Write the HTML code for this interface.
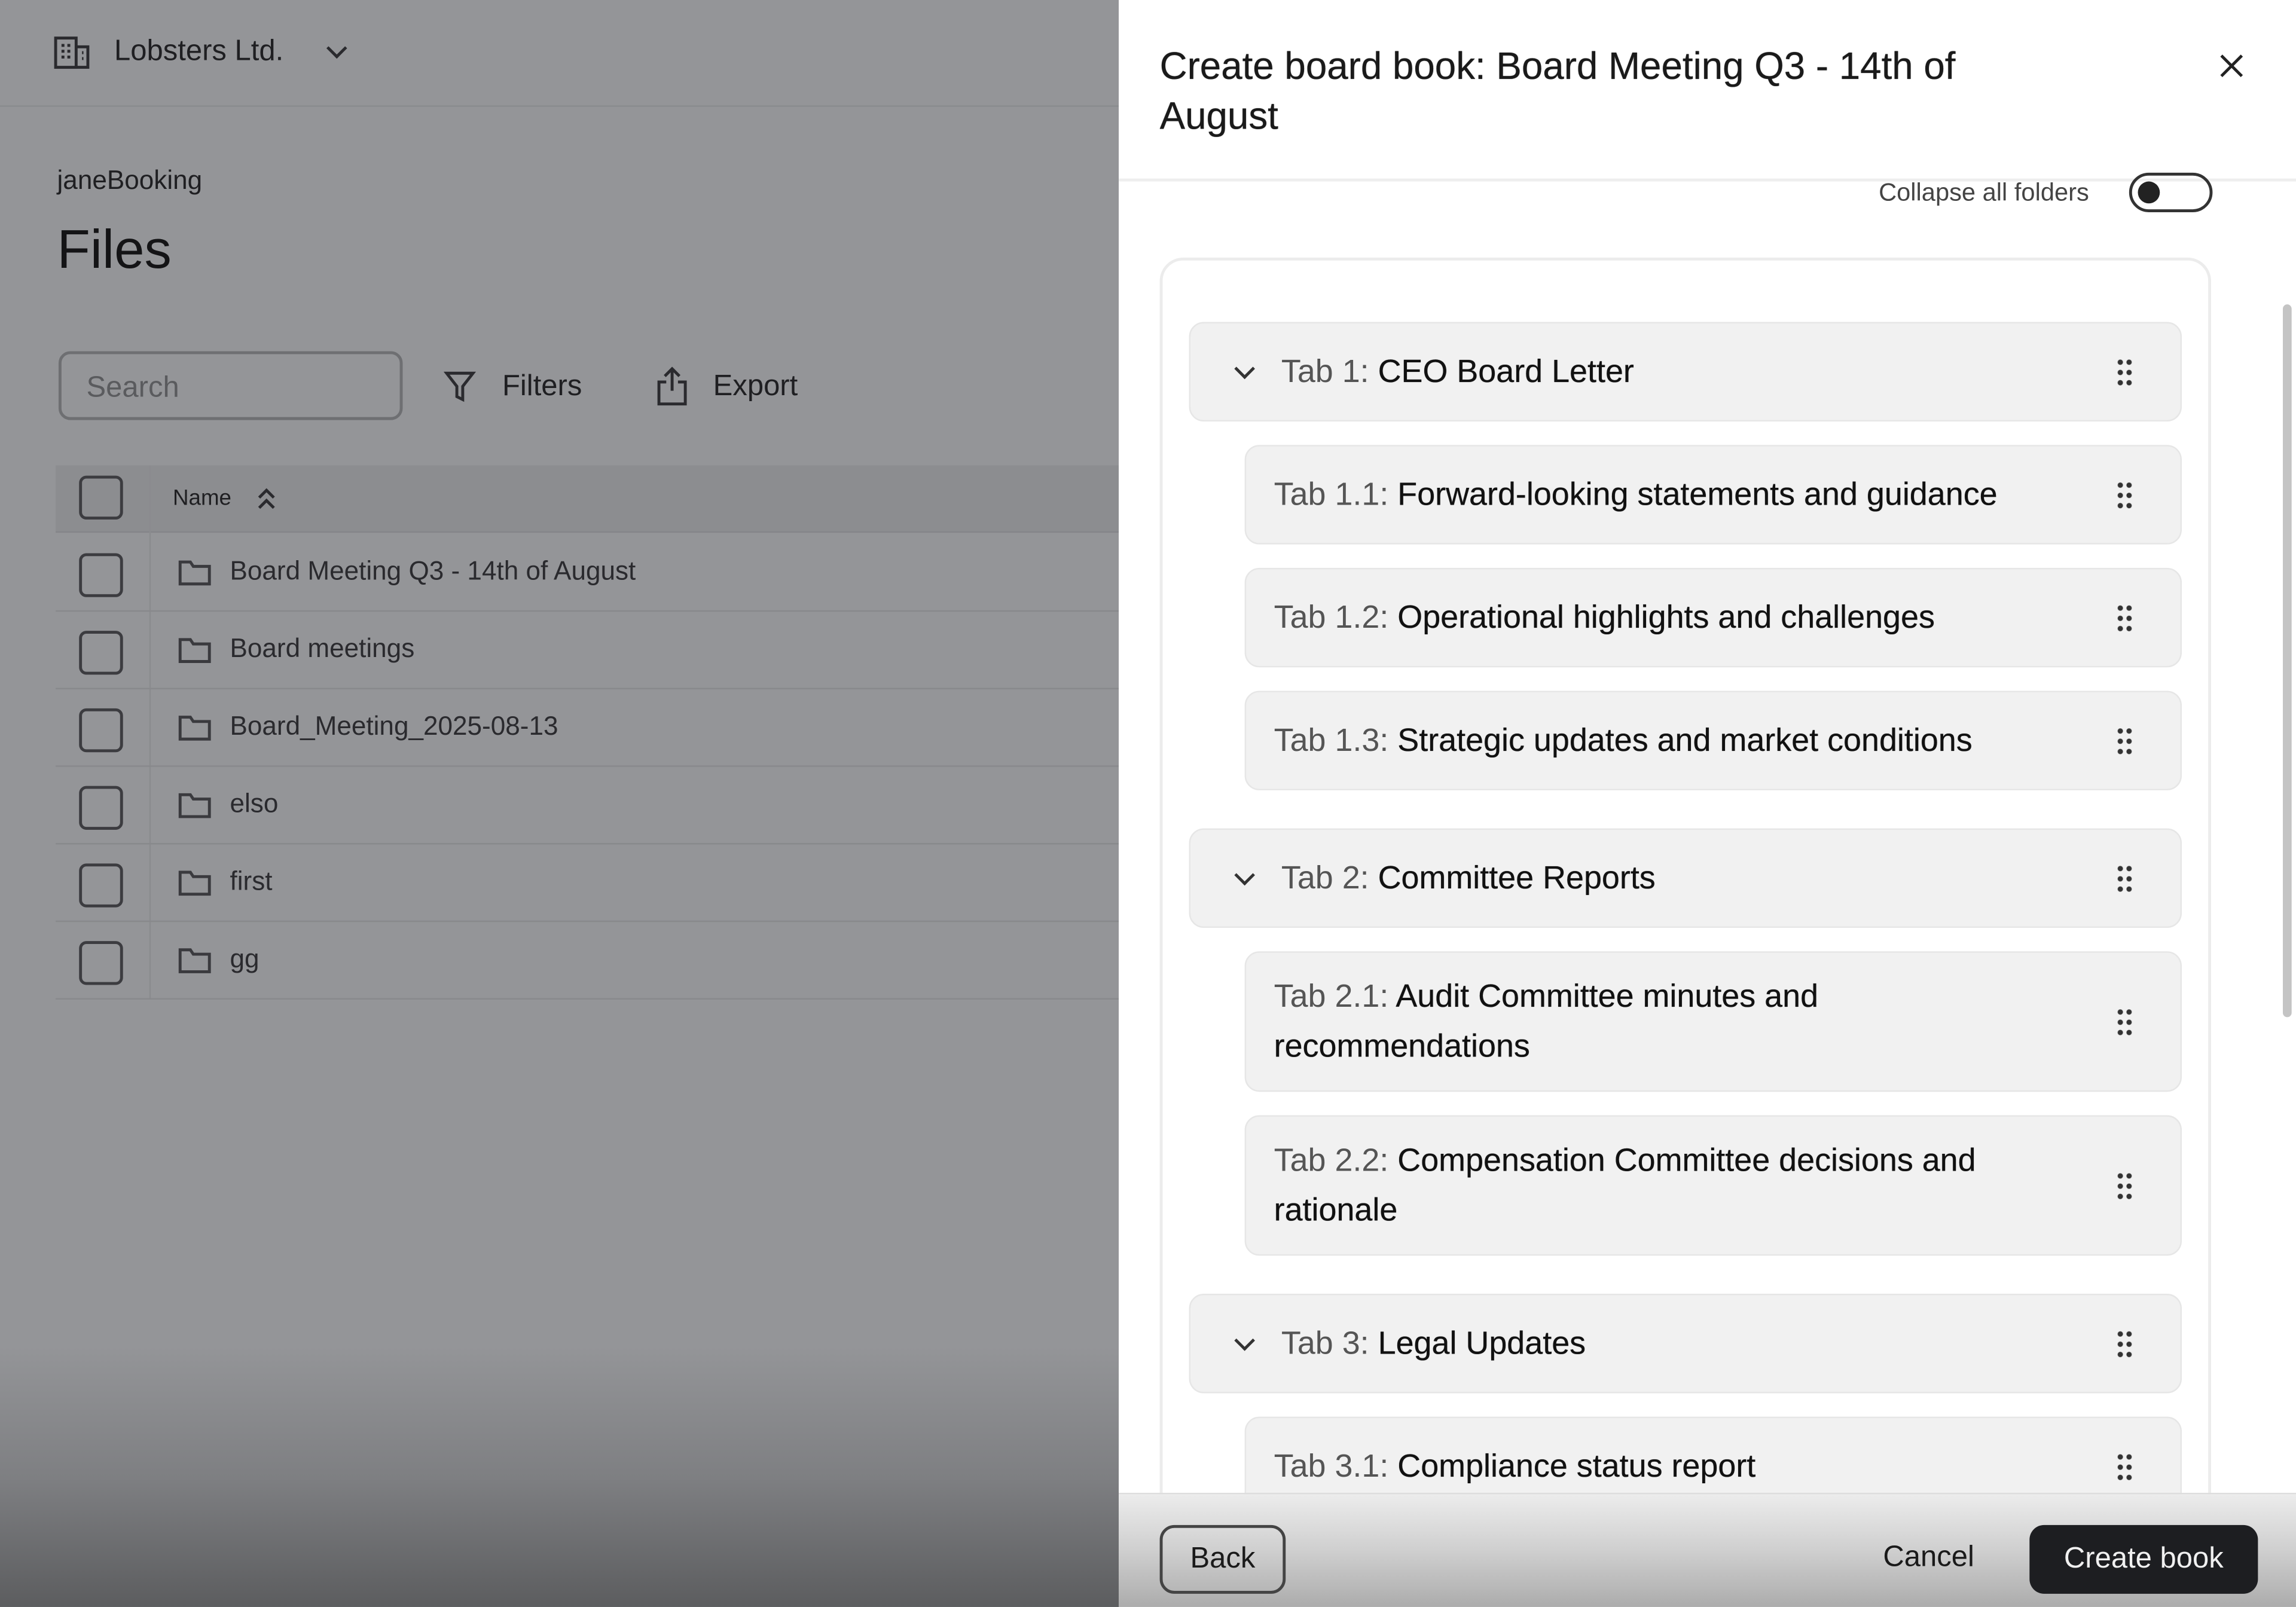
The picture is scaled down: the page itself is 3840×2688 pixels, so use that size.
<!DOCTYPE html>
<html><head><meta charset="utf-8"><style>
*{box-sizing:border-box;margin:0;padding:0}
html,body{width:3840px;height:2688px;overflow:hidden;background:#949598}
#w{position:absolute;left:0;top:0;width:1568px;height:1098px;transform:scale(2.449,2.448);transform-origin:0 0;font-family:"Liberation Sans",sans-serif;}
.abs{position:absolute}
#left{left:0;top:0;width:764px;height:1098px;background:linear-gradient(#949598 0,#949598 920px,#7e7f82 1010px,#5c5d5f 1098px);color:#1f1f22}
.row{position:absolute;left:38px;width:726px;height:53px;border-bottom:1px solid #88898c}
.cb{position:absolute;left:16px;top:13px;width:30px;height:30px;border:2px solid #3c3c40;border-radius:5px}
.fold{position:absolute;left:83px;top:16px}
.rt{position:absolute;left:119px;top:15px;font-size:18px;color:#2a2a2e}
#right{left:764px;top:0;width:804px;height:1098px;background:#fff}
.it{position:absolute;background:#f1f1f1;border:1px solid #e6e6e6;border-radius:10px;font-size:22px;color:#111;font-weight:500}
.it .t{position:absolute;left:19px;top:50%;transform:translateY(-50%);line-height:34px;text-shadow:0 0 .3px #111}
.it .n{color:#555;text-shadow:none}
.it.p .t{left:62px}
.dr{position:absolute;right:32px;top:50%;margin-top:-10px;width:12px;height:20px;background:radial-gradient(circle,#333 1.6px,transparent 2px) 0 0/6px 7px}
.chev{position:absolute;left:32px;top:50%;margin-top:-7px;width:10px;height:10px;border-right:2px solid #333;border-bottom:2px solid #333;transform:rotate(45deg)}
</style></head><body><div id="w">
<div id="left" class="abs">
 <svg class="abs" style="left:36px;top:24px" width="26" height="24" viewBox="0 0 26 24" fill="none" stroke="#2a2a2e" stroke-width="2"><rect x="2" y="2" width="14" height="20"/><path d="M16 8h8v14H16M6 7h2M10 7h2M6 11h2M10 11h2M6 15h2M10 15h2M20 12h1M20 16h1"/></svg>
 <div class="abs" style="left:78px;top:24px;font-size:20px">Lobsters Ltd.</div>
 <div class="abs" style="left:225px;top:28px;width:10px;height:10px;border-right:2px solid #2a2a2e;border-bottom:2px solid #2a2a2e;transform:rotate(45deg)"></div>
 <div class="abs" style="left:0;top:72px;width:764px;height:1px;background:#8a8b8e"></div>
 <div class="abs" style="left:39px;top:113px;font-size:18px">janeBooking</div>
 <div class="abs" style="left:39px;top:150px;font-size:37px;color:#141416">Files</div>
 <div class="abs" style="left:40px;top:240px;width:235px;height:47px;border:2px solid #6e6f72;border-radius:8px"></div>
 <div class="abs" style="left:59px;top:254px;font-size:20px;color:#5a5b5e">Search</div>
 <svg class="abs" style="left:303px;top:252px" width="22" height="24" viewBox="0 0 22 24" fill="none" stroke="#2a2a2e" stroke-width="2"><path d="M2 3h18l-7 9v9l-4-2v-7z"/></svg>
 <div class="abs" style="left:343px;top:253px;font-size:20px">Filters</div>
 <svg class="abs" style="left:447px;top:250px" width="24" height="28" viewBox="0 0 24 28" fill="none" stroke="#2a2a2e" stroke-width="2"><path d="M12 2v15M7 7l5-5 5 5M8 11H3v15h18V11h-5"/></svg>
 <div class="abs" style="left:487px;top:253px;font-size:20px">Export</div>
 <div class="abs" style="left:38px;top:318px;width:726px;height:46px;background:#8c8d90;border-bottom:1px solid #85868a"></div>
 <div class="abs" style="left:54px;top:325px;width:30px;height:30px;border:2px solid #3c3c40;border-radius:5px"></div>
 <div class="abs" style="left:118px;top:332px;font-size:15px">Name</div>
 <svg class="abs" style="left:174px;top:332px" width="16" height="18" viewBox="0 0 16 18" fill="none" stroke="#2a2a2e" stroke-width="2"><path d="M3 8l5-5 5 5M3 15l5-5 5 5"/></svg>
 <div class="abs" style="left:102px;top:318px;width:1px;height:364px;background:#8a8b8e"></div>
 <div class="row" style="top:365px"><div class="cb"></div><svg class="fold" width="24" height="20" viewBox="0 0 24 20" fill="none" stroke="#3a3a3e" stroke-width="2"><path d="M2 3h7l2 3h11v12H2z"/></svg><div class="rt">Board Meeting Q3 - 14th of August</div></div>
 <div class="row" style="top:418px"><div class="cb"></div><svg class="fold" width="24" height="20" viewBox="0 0 24 20" fill="none" stroke="#3a3a3e" stroke-width="2"><path d="M2 3h7l2 3h11v12H2z"/></svg><div class="rt">Board meetings</div></div>
 <div class="row" style="top:471px"><div class="cb"></div><svg class="fold" width="24" height="20" viewBox="0 0 24 20" fill="none" stroke="#3a3a3e" stroke-width="2"><path d="M2 3h7l2 3h11v12H2z"/></svg><div class="rt">Board_Meeting_2025-08-13</div></div>
 <div class="row" style="top:524px"><div class="cb"></div><svg class="fold" width="24" height="20" viewBox="0 0 24 20" fill="none" stroke="#3a3a3e" stroke-width="2"><path d="M2 3h7l2 3h11v12H2z"/></svg><div class="rt">elso</div></div>
 <div class="row" style="top:577px"><div class="cb"></div><svg class="fold" width="24" height="20" viewBox="0 0 24 20" fill="none" stroke="#3a3a3e" stroke-width="2"><path d="M2 3h7l2 3h11v12H2z"/></svg><div class="rt">first</div></div>
 <div class="row" style="top:630px"><div class="cb"></div><svg class="fold" width="24" height="20" viewBox="0 0 24 20" fill="none" stroke="#3a3a3e" stroke-width="2"><path d="M2 3h7l2 3h11v12H2z"/></svg><div class="rt">gg</div></div>
</div>
<div id="right" class="abs">
 <div class="abs" style="left:28px;top:28px;font-size:26px;line-height:34px;color:#1a1a1a;width:620px;text-shadow:0 0 .4px #1a1a1a">Create board book: Board Meeting Q3 - 14th of August</div>
 <svg class="abs" style="left:750px;top:35px" width="20" height="20" viewBox="0 0 20 20" stroke="#222" stroke-width="2"><path d="M3 3l14 14M17 3L3 17"/></svg>
 <div class="abs" style="left:0;top:122px;width:804px;height:2px;background:#eee"></div>
 <div class="abs" style="left:519px;top:122px;font-size:17px;color:#444">Collapse all folders</div>
 <div class="abs" style="left:690px;top:118px;width:57px;height:27px;border:2px solid #333;border-radius:14px"><div style="position:absolute;left:4px;top:4px;width:15px;height:15px;border-radius:50%;background:#222"></div></div>
 <div class="abs" style="left:28px;top:176px;width:718px;height:900px;border:2px solid #ececec;border-radius:16px"></div>
 <div class="abs" style="left:795px;top:208px;width:6px;height:487px;background:#c4c4c4;border-radius:3px"></div>
</div>
<div class="it p" style="left:812px;top:220px;width:678px;height:68px"><div class="chev"></div><div class="t"><span class="n">Tab 1:</span> CEO Board Letter</div><div class="dr"></div></div>
<div class="it" style="left:850px;top:304px;width:640px;height:68px"><div class="t"><span class="n">Tab 1.1:</span> Forward-looking statements and guidance</div><div class="dr"></div></div>
<div class="it" style="left:850px;top:388px;width:640px;height:68px"><div class="t"><span class="n">Tab 1.2:</span> Operational highlights and challenges</div><div class="dr"></div></div>
<div class="it" style="left:850px;top:472px;width:640px;height:68px"><div class="t"><span class="n">Tab 1.3:</span> Strategic updates and market conditions</div><div class="dr"></div></div>
<div class="it p" style="left:812px;top:566px;width:678px;height:68px"><div class="chev"></div><div class="t"><span class="n">Tab 2:</span> Committee Reports</div><div class="dr"></div></div>
<div class="it" style="left:850px;top:650px;width:640px;height:96px"><div class="t" style="width:520px"><span class="n">Tab 2.1:</span> Audit Committee minutes and recommendations</div><div class="dr"></div></div>
<div class="it" style="left:850px;top:762px;width:640px;height:96px"><div class="t" style="width:540px"><span class="n">Tab 2.2:</span> Compensation Committee decisions and rationale</div><div class="dr"></div></div>
<div class="it p" style="left:812px;top:884px;width:678px;height:68px"><div class="chev"></div><div class="t"><span class="n">Tab 3:</span> Legal Updates</div><div class="dr"></div></div>
<div class="it" style="left:850px;top:968px;width:640px;height:68px"><div class="t"><span class="n">Tab 3.1:</span> Compliance status report</div><div class="dr"></div></div>
<div class="abs" style="left:764px;top:1020px;width:804px;height:78px;background:linear-gradient(#ececec,#cfcfcf 50%,#acacac);border-top:1px solid #ddd"></div>
<div class="abs" style="left:792px;top:1042px;width:86px;height:47px;border:2px solid #444;border-radius:10px;font-size:20px;color:#1a1a1a;text-align:center;line-height:43px">Back</div>
<div class="abs" style="left:1286px;top:1053px;font-size:20px;color:#1a1a1a">Cancel</div>
<div class="abs" style="left:1386px;top:1042px;width:156px;height:47px;background:#1d1e21;border-radius:10px;font-size:20px;color:#f0f0f0;text-align:center;line-height:47px">Create book</div>
</div></body></html>
